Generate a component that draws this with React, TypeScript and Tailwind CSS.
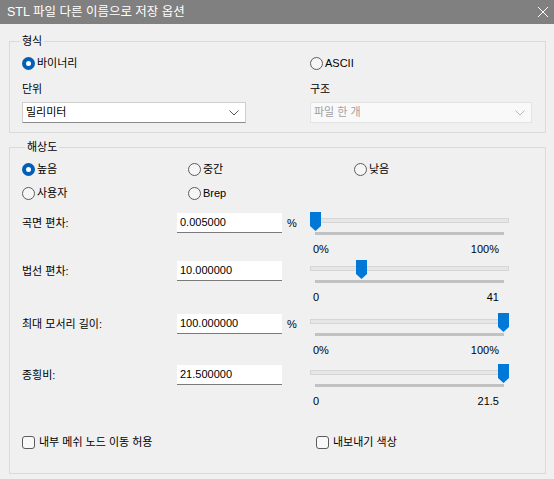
import React from "react";

const FONT = "font-['Liberation_Sans','Noto_Sans_CJK_KR',sans-serif]";

function Radio({ checked, label }: { checked?: boolean; label: string }) {
  return (
    <div className="flex items-center h-4">
      {checked ? (
        <span className="w-[13px] h-[13px] rounded-full bg-[#005fb8] flex items-center justify-center">
          <span className="w-[5px] h-[5px] rounded-full bg-white" />
        </span>
      ) : (
        <span className="w-[13px] h-[13px] rounded-full border border-[#5c5c5c] bg-[#f6f6f6]" />
      )}
      <span className="ml-[2px]">{label}</span>
    </div>
  );
}

function Checkbox({ label }: { label: string }) {
  return (
    <div className="flex items-center h-4">
      <span className="w-[13px] h-[13px] rounded-[3px] border border-[#5c5c5c] bg-[#f8f8f8]" />
      <span className="ml-[4px]">{label}</span>
    </div>
  );
}

function Chevron({ color }: { color: string }) {
  return (
    <svg width="10" height="6" viewBox="0 0 10 6" className="shrink-0">
      <path d="M0.5 0.5 L5 5 L9.5 0.5" fill="none" stroke={color} strokeWidth="1" />
    </svg>
  );
}

function Slider({ pos, min, max }: { pos: number; min: string; max: string }) {
  // pos 0..1 along the tick bar
  const center = 5.5 + pos * 188;
  return (
    <div className="w-[199px] flex flex-col">
      <div className="relative h-[20px]">
        <div className="absolute left-0 right-0 top-[6px] h-[5px] border border-[#d6d6d6] bg-[#e6e6e6]" />
        <svg
          width="11"
          height="19"
          viewBox="0 0 11 19"
          className="absolute top-0"
          style={{ left: center - 5.5 }}
        >
          <path d="M0 0 H11 V14 L5.5 19 L0 14 Z" fill="#0078d7" />
        </svg>
      </div>
      <div className="ml-[5px] w-[189px] h-[3px] bg-[#c2c2c2]" />
      <div className="mt-[6px] flex justify-between pl-[3px] pr-[10px] leading-4">
        <span>{min}</span>
        <span>{max}</span>
      </div>
    </div>
  );
}

function Row({
  label,
  value,
  pct,
  pos,
  min,
  max,
  className,
}: {
  label: string;
  value: string;
  pct?: boolean;
  pos: number;
  min: string;
  max: string;
  className?: string;
}) {
  return (
    <div className={`flex items-start ${className ?? ""}`}>
      <div className="w-[155px] h-[20px] mt-[1px] flex items-center">{label}</div>
      <div className="w-[105px] h-[20px] mt-[1px] bg-white border-b border-[#7a7a7a] flex items-center pl-[3px]">
        {value}
      </div>
      <div className="w-[28px] h-[20px] mt-[1px] pl-[5px] flex items-center">{pct ? "%" : ""}</div>
      <Slider pos={pos} min={min} max={max} />
    </div>
  );
}

export default function App() {
  return (
    <div className={`w-[554px] h-[479px] bg-[#f0f0f0] text-[11px] text-black flex flex-col overflow-hidden ${FONT}`}>
      {/* Title bar */}
      <div className="h-6 shrink-0 bg-[#808080] flex items-center justify-between pl-[7px] pr-[5px] text-white text-[12.5px]">
        <span>STL 파일 다른 이름으로 저장 옵션</span>
        <svg width="12" height="12" viewBox="0 0 12 12">
          <path d="M1 1 L11 11 M11 1 L1 11" stroke="#fff" strokeWidth="1" />
        </svg>
      </div>

      {/* 형식 */}
      <fieldset className="mt-[9px] ml-[9px] mr-[8px] border border-[#dadada] pl-[12px] pr-[13px] pb-[9px]">
        <legend className="-ml-[2px] px-[2px] leading-4">형식</legend>
        <div className="flex mt-[6px]">
          <div className="w-[288px]">
            <Radio checked label="바이너리" />
          </div>
          <Radio label="ASCII" />
        </div>
        <div className="flex mt-[10px]">
          <div className="w-[288px] flex flex-col">
            <div className="leading-4">단위</div>
            <div className="mt-[5px] w-[224px] h-[21px] bg-white border border-[#cfcfcf] border-b-[#8a8a8a] flex items-center justify-between pl-[3px] pr-[6px]">
              <span>밀리미터</span>
              <Chevron color="#555" />
            </div>
          </div>
          <div className="flex flex-col">
            <div className="leading-4">구조</div>
            <div className="mt-[5px] w-[222px] h-[21px] bg-[#f9f9f9] border border-[#e3e3e3] flex items-center justify-between pl-[3px] pr-[6px] text-[#a0a0a0]">
              <span>파일 한 개</span>
              <Chevron color="#b8b8b8" />
            </div>
          </div>
        </div>
      </fieldset>

      {/* 해상도 */}
      <fieldset className="mt-[6px] ml-[9px] mr-[8px] border border-[#dadada] pl-[12px] pb-[23px]">
        <legend className="ml-[3px] px-[2px] leading-4">해상도</legend>
        <div className="grid grid-cols-[166px_166px_auto] mt-[6px]">
          <Radio checked label="높음" />
          <Radio label="중간" />
          <Radio label="낮음" />
        </div>
        <div className="grid grid-cols-[166px_166px_auto] mt-[8px]">
          <Radio label="사용자" />
          <Radio label="Brep" />
        </div>

        <Row className="mt-[11px]" label="곡면 편차:" value="0.005000" pct pos={0} min="0%" max="100%" />
        <Row className="mt-[3px]" label="법선 편차:" value="10.000000" pos={10 / 41} min="0" max="41" />
        <Row className="mt-[8px]" label="최대 모서리 길이:" value="100.000000" pct pos={1} min="0%" max="100%" />
        <Row className="mt-[6px]" label="종횡비:" value="21.500000" pos={1} min="0" max="21.5" />

        <div className="flex mt-[25px]">
          <div className="w-[294px]">
            <Checkbox label="내부 메쉬 노드 이동 허용" />
          </div>
          <Checkbox label="내보내기 색상" />
        </div>
      </fieldset>
    </div>
  );
}
